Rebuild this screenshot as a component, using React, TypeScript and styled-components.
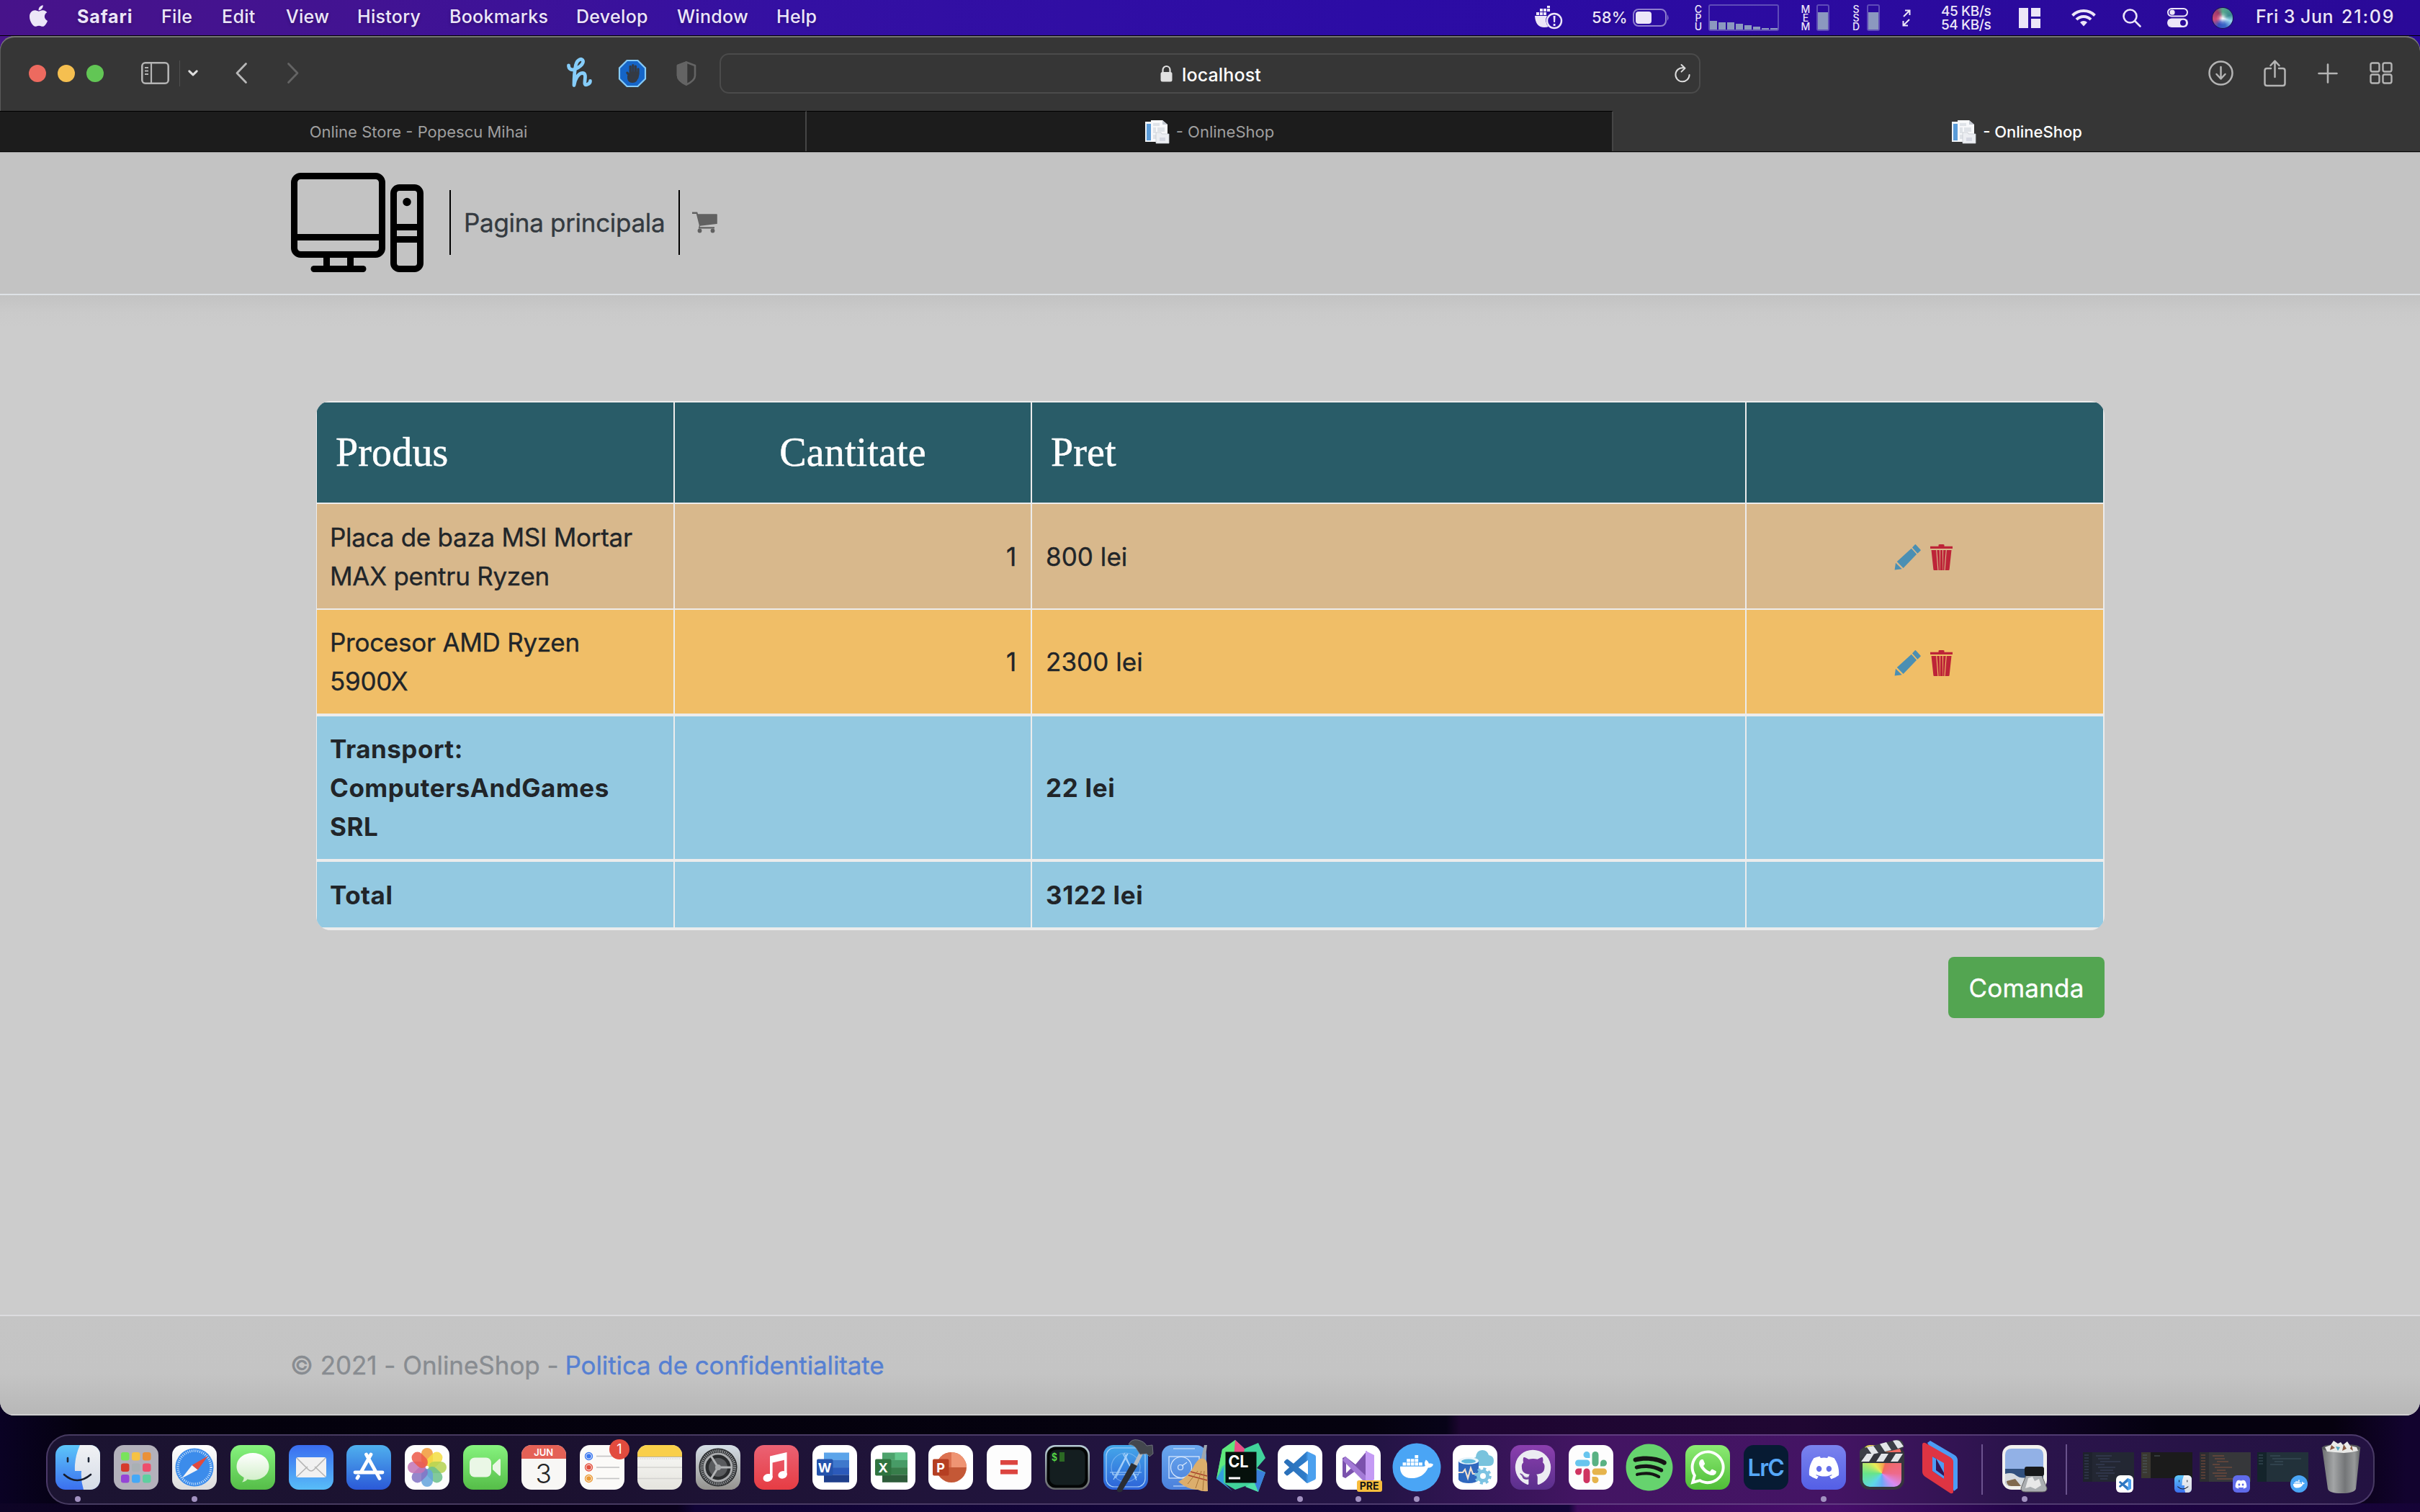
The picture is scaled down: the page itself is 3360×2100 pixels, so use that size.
import React from "react";
import styled, { createGlobalStyle } from "styled-components";
import { FaApple, FaDiscord, FaDocker, FaGithub, FaSpotify, FaWhatsapp, FaHandPaper } from "react-icons/fa";

const GlobalStyle = createGlobalStyle`
  *, *::before, *::after { box-sizing: border-box; }
  body { margin: 0; background: #0b0320; font-family: Inter, "Liberation Sans", sans-serif; }
  svg { display: block; overflow: visible; }
`;

/* ---------- Desktop ---------- */

const Desktop = styled.div`
  width: 3360px;
  height: 2100px;
  overflow: hidden;
  display: flex;
  flex-direction: column;
  background:
    linear-gradient(90deg, #0e0426 0, #090118 300px, #0a011c 940px, #110436 965px, #130538 2178px, #3c0b5c 2190px, #470e6a 2550px, #230548 2800px, #150336 3360px) left bottom / 100% 12px no-repeat,
    linear-gradient(90deg, #0a0224 0, #04010d 120px, #05020f 1900px, #070318 2008px, #1e0632 2028px, #200733 2500px, #120428 2800px, #04010f 3000px, #06010f 3240px, #12032e 3340px) left 1900px / 100% 190px no-repeat,
    linear-gradient(90deg, #48138a, #2a0998);
`;

/* ---------- Menu bar ---------- */

const MenuBar = styled.header`
  height: 50px;
  flex: none;
  display: flex;
  justify-content: space-between;
  padding-left: 40px;
  color: #ece6f8;
  border-bottom: 1px solid #000;
  background: linear-gradient(90deg, #47138a 0, #421392 500px, #3410a3 1100px, #2c0ca5 1900px, #2a0998 3360px);
`;

const MenuGroup = styled.nav`
  display: flex;
  align-items: center;
`;

const AppleSlot = styled.div`
  width: 67px;
  svg { width: 27px; height: 34px; margin-top: -5px; }
`;

const MenuItem = styled.span<{ $w: number; $bold?: boolean }>`
  width: ${(p) => p.$w}px;
  padding-bottom: 4px;
  font-size: 25px;
  font-weight: ${(p) => (p.$bold ? 700 : 500)};
  letter-spacing: ${(p) => (p.$bold ? 0.9 : 0.3)}px;
  white-space: nowrap;
  text-shadow: 0 2px 4px rgba(0, 0, 0, 0.25);
`;

const StatusSlot = styled.div<{ $w: number }>`
  width: ${(p) => p.$w}px;
  flex: none;
`;

const StatusText = styled(MenuItem)<{ $size?: number; $track?: number }>`
  font-size: ${(p) => p.$size ?? 25}px;
  letter-spacing: ${(p) => p.$track ?? 0.45}px;
  padding-bottom: ${(p) => (p.$size ? 1 : 4)}px;
`;

const StackedLabel = styled.div`
  width: 12px;
  font-size: 14px;
  line-height: 12px;
  font-weight: 500;
  text-align: center;
  display: flex;
  flex-direction: column;
  align-items: center;
`;

const Meter = styled.div<{ $wide?: boolean }>`
  width: ${(p) => (p.$wide ? 98 : 18)}px;
  height: 37px;
  border: 2px solid #5f4cb8;
  border-radius: 3px;
  display: flex;
  align-items: flex-end;
  gap: 2px;
`;

const MeterBar = styled.i<{ $h: number; $w: number }>`
  width: ${(p) => p.$w}px;
  height: ${(p) => p.$h}px;
  background: #8b98bf;
`;

const Rates = styled.div`
  font-size: 19px;
  line-height: 19px;
  font-weight: 500;
  letter-spacing: -0.4px;
  margin-top: 1px;
  white-space: nowrap;
`;

const Siri = styled.div`
  width: 28px;
  height: 28px;
  border-radius: 50%;
  background:
    radial-gradient(circle at 50% 52%, #fff 0, rgba(255, 255, 255, 0.2) 28%, transparent 45%),
    conic-gradient(#59a98c, #3a8a90 70deg, #9bd8f0 110deg, #3a6ac8 160deg, #3650c0 210deg, #d04a78 260deg, #9c3a68 320deg, #59a98c);
  box-shadow: 0 0 0 1px #1a1a4a;
`;

/* ---------- Browser window ---------- */

const BrowserWindow = styled.main`
  height: 1916px;
  flex: none;
  display: flex;
  flex-direction: column;
  border-radius: 20px;
  overflow: hidden;
  background: #cccccc;
`;

const Toolbar = styled.div`
  height: 104px;
  flex: none;
  display: flex;
  align-items: center;
  padding: 0 0 1px 40px;
  background: #363636;
  border-radius: 20px 20px 0 0;
  box-shadow: inset 0 2px 0 #747474, inset 1px 0 0 #5a5a5a;
  color: #b4b4b4;
`;

const TrafficLights = styled.div`
  display: flex;
  gap: 16px;
  width: 156px;
`;

const Light = styled.i<{ $color: string }>`
  width: 24px;
  height: 24px;
  border-radius: 50%;
  background: ${(p) => p.$color};
`;

const ToolSlot = styled.div<{ $w: number }>`
  width: ${(p) => p.$w}px;
  flex: none;
`;

const Divider = styled.div`
  width: 1px;
  height: 36px;
  margin-right: 11px;
  background: #505050;
`;

const AddressBar = styled.div`
  width: 1362px;
  height: 56px;
  margin-right: 705px;
  flex: none;
  display: flex;
  align-items: center;
  padding: 0 12px 0 610px;
  border: 2px solid #4b4b4b;
  border-radius: 13px;
  color: #fff;
`;

const Address = styled.span`
  margin-left: 13px;
  padding-top: 4px;
  flex: 1;
  font-size: 25px;
  font-weight: 500;
  letter-spacing: 0.15px;
`;

const TabBar = styled.div`
  height: 57px;
  flex: none;
  display: flex;
  background: #363636;
  border-bottom: 1px solid #000;
`;

const Tab = styled.div<{ $active?: boolean; $indent?: number }>`
  width: 1120px;
  height: 56px;
  display: flex;
  align-items: center;
  justify-content: center;
  gap: 10px;
  padding-left: ${(p) => p.$indent ?? 0}px;
  font-size: 22px;
  font-weight: ${(p) => (p.$active ? 500 : 400)};
  color: ${(p) => (p.$active ? "#fff" : "#9f9f9f")};
  background: ${(p) => (p.$active ? "#363636" : "#1c1c1c")};
  border-top: 1px solid ${(p) => (p.$active ? "#363636" : "#000")};
  border-right: ${(p) => (p.$active ? "0" : "2px solid #454545")};
`;

/* ---------- Shop page ---------- */

const NavBar = styled.div`
  height: 199px;
  flex: none;
  display: flex;
  align-items: center;
  padding: 0 0 2px 404px;
  background: #c3c3c3;
  border-top: 1px solid #8a8a8a;
  border-bottom: 2px solid #dee2e6;
`;

const NavLink = styled.a`
  display: flex;
  align-items: center;
  height: 90px;
  padding: 0 17px;
  border-left: 2px solid #000;
  font-size: 35px;
  letter-spacing: -0.3px;
  color: #343a40;
  -webkit-text-stroke: 0.35px #343a40;
  white-space: nowrap;
`;

const TextLink = styled(NavLink)`
  width: 318px;
  margin-left: 36px;
  padding: 0 0 1px 18px;
`;

const Page = styled.div`
  flex: 1;
  display: flex;
  flex-direction: column;
  align-items: flex-end;
  padding: 147px 438px 0 439px;
  background: linear-gradient(#c3c3c3 0, #cacaca 24px, #cccccc 44px);
`;

const CartTable = styled.div`
  width: 2483px;
  flex: none;
  overflow: hidden;
  padding: 2px 2px 4px 1px;
  border-radius: 20px;
  background: #ececec;
`;

const CartRow = styled.div<{ $h: number; $line: number; $bg: string }>`
  display: grid;
  grid-template-columns: 495px 494px 990px 495px;
  column-gap: 2px;
  height: ${(p) => p.$h}px;
  margin-bottom: ${(p) => p.$line}px;
  > div { background: ${(p) => p.$bg}; }
`;

const HeadCell = styled.div<{ $center?: boolean }>`
  display: flex;
  align-items: center;
  justify-content: ${(p) => (p.$center ? "center" : "flex-start")};
  padding: 0 26px 2px;
  font-family: "Liberation Serif", "Times New Roman", serif;
  font-size: 56px;
  letter-spacing: 0.15px;
  color: #fff;
  -webkit-text-stroke: 0.5px #fff;
`;

const Cell = styled.div<{ $align?: string; $bold?: boolean }>`
  display: flex;
  align-items: center;
  justify-content: ${(p) => p.$align ?? "flex-start"};
  padding: 0 19px 0 18px;
  font-size: 35px;
  line-height: 54px;
  font-weight: ${(p) => (p.$bold ? 700 : 400)};
  letter-spacing: ${(p) => (p.$bold ? 0.5 : -0.27)}px;
  color: #212529;
  -webkit-text-stroke: ${(p) => (p.$bold ? 0 : 0.35)}px #212529;
  white-space: pre;
`;

const NumberCell = styled(Cell)`
  padding-right: 20px;
`;

const PriceCell = styled(Cell)`
  padding-left: 19px;
  letter-spacing: ${(p) => (p.$bold ? 0.7 : 0.05)}px;
`;

const Actions = styled.div`
  display: flex;
  gap: 13px;
  padding: 3px 3px 0 0;
`;

const OrderButton = styled.button`
  width: 217px;
  height: 85px;
  margin-top: 37px;
  padding: 0;
  border: 0;
  border-radius: 8px;
  background: #53a551;
  color: #fff;
  font: 400 35px Inter, "Liberation Sans", sans-serif;
  letter-spacing: 0.2px;
  -webkit-text-stroke: 0.35px #fff;
`;

const Footer = styled.footer`
  height: 140px;
  flex: none;
  display: flex;
  align-items: center;
  gap: 9px;
  padding-left: 403px;
  border-top: 2px solid #dcdcdf;
  border-bottom: 2px solid #cfcfcf;
  background: linear-gradient(#c5c5c5 0, #c4c4c4 80px, #b7b7b7 138px);
  color: #888c91;
  font-size: 35px;
  letter-spacing: -0.05px;
  -webkit-text-stroke: 0.35px currentColor;
  a { color: #5680d2; letter-spacing: -0.12px; }
`;

/* ---------- Dock ---------- */

const Dock = styled.div`
  width: 3233px;
  height: 98px;
  margin: 26px 0 0 64px;
  padding-left: 2px;
  flex: none;
  display: flex;
  border: 2px solid rgba(150, 130, 180, 0.36);
  border-radius: 32px;
  background: linear-gradient(90deg, #1c1432 0, #1b1130 700px, #20143a 1200px, #241446 1850px, #431563 2130px, #441464 2480px, #2b144c 2720px, #231241 3233px);
`;

const DockSlot = styled.div`
  position: relative;
  width: 80.8px;
  flex: none;
  display: flex;
  flex-direction: column;
  align-items: center;
  padding-top: 13px;
`;

const Tile = styled.div<{ $bg?: string }>`
  width: 62px;
  height: 62px;
  flex: none;
  display: flex;
  align-items: center;
  justify-content: center;
  border-radius: 14px;
  background: ${(p) => p.$bg ?? "none"};
`;

const Running = styled.i`
  width: 8px;
  height: 8px;
  margin-top: 9px;
  border-radius: 50%;
  background: #a291c0;
`;

const Badge = styled.span`
  position: absolute;
  top: 5px;
  right: 2px;
  width: 28px;
  height: 28px;
  border-radius: 50%;
  background: #e24b3e;
  color: #fff;
  font-size: 18px;
  line-height: 28px;
  text-align: center;
`;

const PreBadge = styled.span`
  position: absolute;
  top: 62px;
  left: 38px;
  width: 35px;
  height: 16px;
  border-radius: 3px;
  background: #f7bd3c;
  color: #171717;
  font-size: 14px;
  font-weight: 700;
  line-height: 16px;
  text-align: center;
`;

const DockRule = styled.i`
  width: 2px;
  height: 70px;
  margin: 12px 17px 0;
  flex: none;
  background: rgba(170, 145, 205, 0.5);
`;

const Calendar = styled(Tile)`
  flex-direction: column;
  justify-content: flex-start;
  overflow: hidden;
  background: #f8f7f5;
  color: #252525;
  font-size: 37px;
  font-weight: 300;
  line-height: 41px;
  span {
    width: 100%;
    height: 19px;
    background: #e46156;
    color: #fff;
    font-size: 13px;
    font-weight: 600;
    line-height: 20px;
    text-align: center;
  }
`;

const Lightroom = styled(Tile)`
  background: #071b33;
  color: #56a8f8;
  font-size: 32px;
  font-weight: 600;
  letter-spacing: -1.5px;
`;

const MiniWindow = styled.div`
  position: relative;
  width: 80.8px;
  padding: 23px 0 0 5px;
  flex: none;
`;

const MiniBadge = styled.div<{ $bg: string; $round?: boolean }>`
  position: absolute;
  left: 51px;
  top: 55px;
  width: 24px;
  height: 24px;
  border-radius: ${(p) => (p.$round ? "50%" : "6px")};
  background: ${(p) => p.$bg};
  display: flex;
  align-items: center;
  justify-content: center;
`;

/* ---------- Menu bar icons ---------- */

const DockerStatus = () => (
  <svg width="38" height="34" viewBox="0 0 38 34" fill="currentColor">
    <path d="M0 14h17a12 12 0 0 0 2 15q-2 1-6 1Q1 30 0 14ZM2 9h4v4H2ZM7 9h4v4H7ZM12 9h4v4h-4ZM7 4h4v4H7ZM12 4h4v4h-4ZM17 0h4v3h-4ZM17 4h4v4h-4Z" />
    <circle cx="27" cy="21" r="10" fill="none" stroke="currentColor" strokeWidth="2.4" />
    <path d="M25.6 14h3l-.5 9h-2ZM25.7 25h2.8v3h-2.8Z" />
  </svg>
);
const Battery = () => (
  <svg width="50" height="25" viewBox="0 0 50 25">
    <rect x="1" y="1" width="45" height="23" rx="7" fill="none" stroke="#8f7fce" strokeWidth="2" />
    <rect x="4" y="4" width="22" height="17" rx="4" fill="#ece6f8" />
    <path d="M48 8q3 4.500 0 9Z" fill="#8f7fce" />
  </svg>
);
const NetArrows = () => (
  <svg width="12" height="24" viewBox="0 0 12 24" fill="none" stroke="currentColor" strokeWidth="2">
    <path d="M4 1.500h6.500V8M10.500 1.500 2 10M1.500 16v6.500H8M1.500 22.500 10 14" />
  </svg>
);
const Panes = () => (
  <svg width="30" height="28" viewBox="0 0 30 28" fill="currentColor">
    <path d="M0 0h13v28H0ZM17 0h13v12H17ZM17 15h13v13H17Z" />
  </svg>
);
const Wifi = () => (
  <svg width="34" height="25" viewBox="0 0 34 25" fill="none" stroke="currentColor" strokeWidth="4">
    <path d="M1.500 9.500a22 22 0 0 1 31 0M7 15.200a14 14 0 0 1 20 0" />
    <path d="m17 24.500-5-5.500a7 7 0 0 1 10 0Z" fill="currentColor" stroke="none" />
  </svg>
);
const Search = () => (
  <svg width="26" height="26" viewBox="0 0 26 26" fill="none" stroke="currentColor" strokeWidth="2.600" strokeLinecap="round">
    <circle cx="10.500" cy="10.500" r="9" />
    <path d="m17.500 17.500 7 7" />
  </svg>
);
const ControlCenter = () => (
  <svg width="29" height="27" viewBox="0 0 29 27">
    <rect x="1" y="1" width="27" height="10.500" rx="5.200" fill="none" stroke="currentColor" strokeWidth="2" />
    <circle cx="7" cy="6.200" r="3.600" fill="currentColor" />
    <rect x="0" y="14.500" width="29" height="12.500" rx="6.200" fill="currentColor" />
    <circle cx="22" cy="20.700" r="4" fill="#2a0998" />
  </svg>
);

/* ---------- Toolbar icons ---------- */

const SidebarIcon = () => (
  <svg width="39" height="31" viewBox="0 0 39 31" fill="none" stroke="currentColor" strokeWidth="2.600">
    <rect x="1.300" y="1.300" width="36.400" height="28.400" rx="4.500" />
    <path d="M14 1.500v28" strokeWidth="2.200" />
    <path d="M5 8h5M5 12.500h5M5 17h5" strokeWidth="1.800" />
  </svg>
);
const Chevron = ({ dir, color }: { dir: "left" | "right"; color: string }) => (
  <svg width="16" height="29" viewBox="0 0 16 29" fill="none" stroke={color} strokeWidth="2.800" strokeLinecap="round" strokeLinejoin="round">
    <path d={dir === "left" ? "M14.500 1.500 2 14.500l12.500 13" : "M1.500 1.500 14 14.500l-12.500 13"} />
  </svg>
);
const SmallDown = () => (
  <svg width="14" height="9" viewBox="0 0 14 9" fill="none" stroke="#dedede" strokeWidth="3" strokeLinecap="round" strokeLinejoin="round">
    <path d="m1.800 1.800 5.200 5 5.200-5" />
  </svg>
);
const HoneyIcon = () => (
  <svg width="35" height="39" viewBox="0 0 35 39" fill="none" stroke="#86cdfa" strokeWidth="4.800" strokeLinecap="round" strokeLinejoin="round">
    <path d="M2.500 9c0 5 4 7 9 5s12-7 11-11.500-8-2-10 5.500c-2 9-2.500 20-2.500 28.500 1-8 6-17 11.500-17s4 7 3.500 11 0 6 3 5 4.500-3 4.500-5" />
  </svg>
);
const BlockerIcon = () => (
  <svg width="38" height="38" viewBox="0 0 38 38">
    <path d="M11.500 1h15L37 11.500v15L26.500 37h-15L1 26.500v-15Z" fill="#1565c8" stroke="#86cbf8" strokeWidth="2.200" />
    <g transform="translate(9 6)" color="#343a44"><FaHandPaper size={21} /></g>
    <path d="M12 22v4q1 6 7.500 6t7-7v-4Z" fill="#343a44" />
  </svg>
);
const ShieldIcon = () => (
  <svg width="28" height="34" viewBox="0 0 28 34" fill="none" stroke="#646464" strokeWidth="2.600" strokeLinejoin="round">
    <path d="m14 1.500 12 4.500v14q0 7-12 12.500Q2 27 2 20V6Z" />
    <path d="M14 1.500 2 6v14q0 7 12 12.500Z" fill="#646464" />
  </svg>
);
const Lock = () => (
  <svg width="17" height="24" viewBox="0 0 17 24">
    <path d="M3.500 11V7a5 5 0 0 1 10 0v4" fill="none" stroke="#e0e0e0" strokeWidth="2.200" />
    <rect x="0.500" y="10" width="16" height="13.500" rx="2.500" fill="#e0e0e0" />
  </svg>
);
const Reload = () => (
  <svg width="22" height="26" viewBox="0 0 22 26" fill="none" stroke="#dcdcdc" strokeWidth="2" strokeLinecap="round" strokeLinejoin="round">
    <path d="M12 5.200A9.600 9.600 0 1 0 20.600 15M9.500 1l5 4.800-5 4.800" />
  </svg>
);
const Download = () => (
  <svg width="35" height="35" viewBox="0 0 35 35" fill="none" stroke="currentColor" strokeWidth="2.500" strokeLinecap="round" strokeLinejoin="round">
    <circle cx="17.500" cy="17.500" r="16" />
    <path d="M17.500 9v16M11.500 19l6 6.500 6-6.500" />
  </svg>
);
const Share = () => (
  <svg width="31" height="38" viewBox="0 0 31 38" fill="none" stroke="currentColor" strokeWidth="2.500" strokeLinecap="round" strokeLinejoin="round">
    <path d="M10 12H4.500Q1.500 12 1.500 15v18q0 3 3 3h22q3 0 3-3V15q0-3-3-3H21M15.500 24V1.800M9.500 8l6-6.400L21.500 8" />
  </svg>
);
const Plus = () => (
  <svg width="28" height="28" viewBox="0 0 28 28" stroke="currentColor" strokeWidth="2.600" strokeLinecap="round">
    <path d="M14 1.500v25M1.500 14h25" />
  </svg>
);
const TabGrid = () => (
  <svg width="32" height="31" viewBox="0 0 32 31" fill="none" stroke="currentColor" strokeWidth="2.400">
    <rect x="1.500" y="1.500" width="12" height="12" rx="2.500" />
    <rect x="18.500" y="1.500" width="12" height="12" rx="2.500" />
    <rect x="1.500" y="17.500" width="12" height="12" rx="2.500" />
    <rect x="18.500" y="17.500" width="12" height="12" rx="2.500" />
  </svg>
);
const PageIcon = () => (
  <svg width="33" height="32" viewBox="0 0 33 32">
    <path d="M0 2h22v28H0Z" fill="#eef3f8" />
    <path d="M2 5h6v23H2Z" fill="#5a9bd8" />
    <path d="M8 0h16l7 6v24H8Z" fill="#f7f8fa" />
    <path d="M24 0v6h7Z" fill="#c3c8d0" />
    <path d="M11 4h9v4h-9ZM11 10h4v8h-4ZM17 10h10v6H17ZM11 20h4v6h-4Z" fill="#dfe3e8" />
    <path d="M15 17h7l1 2h10v13H15Z" fill="#eceef2" stroke="#c7cad1" strokeWidth=".8" />
    <path d="M20 24h8v5h-8Z" fill="#d5d8e2" />
  </svg>
);

/* ---------- Shop icons ---------- */

const ShopLogo = () => (
  <svg width="184" height="138" viewBox="0 0 184 138" fill="none" stroke="#000" strokeWidth="9">
    <rect x="4.500" y="4.500" width="122" height="109" rx="9" />
    <path d="M4 89.500h123M49.500 116v14M82.500 116v14" />
    <path d="M32 133.500h68" strokeLinecap="round" />
    <rect x="142.500" y="20.500" width="37" height="113" rx="8" />
    <path d="M142 75.500h38M142 92.500h38" />
    <circle cx="161" cy="40.500" r="5.700" fill="#000" stroke="none" />
  </svg>
);
const CartIcon = () => (
  <svg width="35" height="30" viewBox="0 0 35 30" fill="#616161">
    <path d="M0 .5h7.200l.8 2.700h26q.8 0 .8 1v12q0 .8-.8.9L11 19.700l-.3 1.600H31v2.200H8.800L9.800 19 5.800 3H0Z" />
    <circle cx="10.500" cy="26.500" r="2.900" />
    <circle cx="28.500" cy="26.500" r="2.900" />
  </svg>
);
const Pencil = () => (
  <svg width="37" height="36" viewBox="0 0 37 36" fill="#4b8fb3">
    <path d="M.6 35.600 2 25.800l8.700 8.400ZM3.800 24.100 23.800 5.700l7.300 8-18.500 19.200ZM25 4.600 28.600.5q.7-.8 1.500 0l6.400 7q.6.7 0 1.300l-4.100 4Z" />
  </svg>
);
const TrashIcon = () => (
  <svg width="31" height="36" viewBox="0 0 31 36" fill="#bd2438">
    <path d="M0 2.800h11.500V.8Q12 0 13 0h5q1 0 1.500.8v2H31V6H0ZM1.500 8h6.700l2.200 28H5.500q-1 0-1.100-1ZM9.300 8h3.600l.7 28h-2.100ZM14 8h3v28h-3ZM18.100 8h3.600l-2.200 28h-2.100ZM22.800 8h6.700l-2.900 27q-.1 1-1.100 1h-4.900Z" />
  </svg>
);

/* ---------- Dock icons ---------- */

const CODE_PATH =
  "M23.15 2.587L18.21.21a1.494 1.494 0 0 0-1.705.29l-9.46 8.63-4.12-3.128a.999.999 0 0 0-1.276.057L.327 7.261A1 1 0 0 0 .326 8.74L3.899 12 .326 15.26a1 1 0 0 0 .001 1.479L1.65 17.94a.999.999 0 0 0 1.276.057l4.12-3.128 9.46 8.63a1.492 1.492 0 0 0 1.704.29l4.942-2.377A1.5 1.5 0 0 0 24 20.06V3.939a1.5 1.5 0 0 0-.85-1.352zm-5.146 14.861L10.826 12l7.178-5.448v10.896z";

const CodeLogo = ({ size }: { size: number }) => (
  <svg width={size} height={size} viewBox="0 0 24 24">
    <defs>
      <linearGradient id="code" x1="0" x2="1">
        <stop offset="0" stopColor="#2a6fb8" />
        <stop offset=".68" stopColor="#2f7cc9" />
        <stop offset=".76" stopColor="#4ba0ee" />
      </linearGradient>
    </defs>
    <path d={CODE_PATH} fill="url(#code)" />
  </svg>
);

const Finder = ({ size = 62 }: { size?: number }) => (
  <svg width={size} height={size} viewBox="0 0 62 62">
    <defs>
      <linearGradient id="fb" x2="0" y2="1"><stop stopColor="#5dc6fa" /><stop offset="1" stopColor="#3b6fee" /></linearGradient>
      <linearGradient id="fw" x2="0" y2="1"><stop stopColor="#f1f2f5" /><stop offset="1" stopColor="#d4dbe6" /></linearGradient>
      <clipPath id="fc"><rect width="62" height="62" rx="14" /></clipPath>
    </defs>
    <g clipPath="url(#fc)">
      <path d="M0 0h62v62H0Z" fill="url(#fb)" />
      <path d="M34 0Q26 18 27 36h9q-1 13 3 26h23V0Z" fill="url(#fw)" />
    </g>
    <path d="M17 18v5M46 18v5" stroke="#1d2536" strokeWidth="2.600" strokeLinecap="round" />
    <path d="M12 41q18 16 37 0" fill="none" stroke="#171c2a" strokeWidth="2.600" strokeLinecap="round" />
  </svg>
);

const padColors = ["#7ae35c", "#f6c244", "#ea9138", "#d63a2c", "#a9b0b4", "#ee4e6c", "#9544d6", "#45a8f6", "#5ecf9f"];
const Launchpad = () => (
  <svg width="62" height="62">
    {padColors.map((c, i) => (
      <rect key={c} x={10 + (i % 3) * 15} y={10 + Math.floor(i / 3) * 15.5} width="11.500" height="11.500" rx="3.200" fill={c} />
    ))}
  </svg>
);

const SafariIcon = () => (
  <svg width="62" height="62" viewBox="0 0 62 62">
    <circle cx="31" cy="31" r="26.500" fill="#3c8ceb" />
    <circle cx="31" cy="31" r="23" fill="none" stroke="#d4e8fb" strokeWidth="3.400" strokeDasharray="1 1.800" />
    <path d="M50 15 35.500 34.500l-8-6.500Z" fill="#e2493d" />
    <path d="m27.500 28 8 6.500L13.500 46Z" fill="#f3f4f6" />
  </svg>
);
const Messages = () => (
  <svg width="62" height="62" viewBox="0 0 62 62">
    <defs><linearGradient id="mg" x2="0" y2="1"><stop stopColor="#fff" /><stop offset="1" stopColor="#cfeec6" /></linearGradient></defs>
    <path d="M31 11c13 0 22.500 8 22.500 19S44 48.500 31 48.500q-4 0-7.500-1Q21 51 16 51.500q3-3 2.500-6.500C12 41.500 8.500 36.500 8.500 30 8.500 19 18 11 31 11Z" fill="url(#mg)" />
  </svg>
);
const Mail = () => (
  <svg width="62" height="62" viewBox="0 0 62 62" fill="none" stroke="#b5b5b5" strokeWidth="1.600">
    <rect x="10" y="17" width="42" height="28" rx="3" fill="#f1f1f1" stroke="none" />
    <path d="m11 44 15-14M51 44 36 30M11 18l16 16q4 4 8 0l16-16" />
  </svg>
);
const AppStore = () => (
  <svg width="62" height="62" viewBox="0 0 62 62" fill="none" stroke="#fff" strokeWidth="4.800" strokeLinecap="round">
    <path d="M34 13 20 38M27.500 13 46 46.500M12 38h38M15 46l1.500-2.500" />
  </svg>
);
const petals = ["#f29a38", "#f3dd41", "#b5d352", "#6cc08b", "#64a4dc", "#8273c4", "#c275b6", "#ec5a49"];
const Photos = () => (
  <svg width="62" height="62" viewBox="-31 -31 62 62">
    {petals.map((c, i) => (
      <rect key={c} x="-8" y="-27" width="16" height="25" rx="8" fill={c} opacity=".86" transform={`rotate(${i * 45})`} />
    ))}
  </svg>
);
const FaceTime = () => (
  <svg width="62" height="62" viewBox="0 0 62 62" fill="#eaf7e6">
    <rect x="9" y="17.500" width="30" height="27" rx="7" />
    <path d="M41 28 50 19.500q2-1 2 1.500v20q0 2.500-2 1.500L41 34Z" />
  </svg>
);
const Reminders = () => (
  <svg width="62" height="62" viewBox="0 0 62 62">
    {["#3977f0", "#e3503f", "#eb9a35"].map((c, i) => (
      <g key={c} transform={`translate(0 ${15.500 + i * 15.500})`}>
        <circle cx="12.500" r="5" fill="none" stroke={c} strokeWidth="1.400" />
        <circle cx="12.500" r="3.300" fill={c} />
        <path d="M23 0h32" stroke="#c4c4c4" strokeWidth="1.600" />
      </g>
    ))}
  </svg>
);
const Notes = () => (
  <svg width="62" height="62" viewBox="0 0 62 62">
    <path d="M0 16V14A14 14 0 0 1 14 0h34a14 14 0 0 1 14 14v2Z" fill="#f9cf4a" />
    <path d="M0 16.500h62" stroke="#b9b2a0" />
    <path d="M1 19h60" stroke="#bbb" strokeDasharray="1 1.600" />
    <path d="M0 31h62M0 46.500h62" stroke="#d4d3d0" strokeWidth="1.400" />
  </svg>
);
const Settings = () => (
  <svg width="62" height="62" viewBox="0 0 62 62" fill="none">
    <circle cx="31" cy="31" r="26.500" fill="#2a2c2e" />
    <circle cx="31" cy="31" r="23" stroke="#8c8f92" strokeWidth="4" strokeDasharray="1.500 1.200" />
    <circle cx="31" cy="31" r="19" stroke="#a9abad" strokeWidth="3" />
    <circle cx="31" cy="31" r="13" fill="#595b5e" />
    <path d="M31 31h19M31 31l-10-16M31 31 21 47" stroke="#b2b4b6" strokeWidth="3" />
    <circle cx="31" cy="31" r="4" fill="#a7a9ab" />
  </svg>
);
const Music = () => (
  <svg width="62" height="62" viewBox="0 0 62 62" fill="#fff">
    <path d="M22 15.500 45.500 10v31.500h-3.600V20.800L25.600 24.500v20H22Z" />
    <ellipse cx="19" cy="45.500" rx="6.800" ry="5.400" transform="rotate(-18 19 45)" />
    <ellipse cx="39.500" cy="41.500" rx="6.400" ry="5.200" transform="rotate(-18 39 41)" />
  </svg>
);
const OfficeLetter = styled.text`
  font: 700 18px Inter, "Liberation Sans", sans-serif;
  fill: #fff;
  text-anchor: middle;
`;
const Office = ({ letter, shades, box }: { letter: string; shades: string[]; box: string }) => (
  <svg width="62" height="62" viewBox="0 0 62 62">
    {letter === "P" ? (
      <>
        <circle cx="32" cy="31" r="21" fill={shades[2]} />
        <path d="M32 10a21 21 0 0 1 21 21H32Z" fill={shades[0]} />
        <path d="M32 10a21 21 0 0 0-21 21h21Z" fill={shades[1]} />
      </>
    ) : (
      shades.map((c, i) => <rect key={c} x="16" y={10.500 + i * 10.300} width="35" height="10.400" fill={c} />)
    )}
    {letter === "X" && <path d="M33.500 10.500H51v10.300H33.500Z" fill="#63c58b" />}
    <rect x="6" y="19.500" width="22.500" height="23" rx="2" fill={box} />
    <OfficeLetter x="17.200" y="37.500">{letter}</OfficeLetter>
  </svg>
);
const TermText = styled.text`
  font: 700 17px "Liberation Mono", monospace;
  fill: #55d645;
`;
const Terminal = () => (
  <svg width="62" height="62" viewBox="0 0 62 62">
    <rect x="2.500" y="2.500" width="57" height="57" rx="12" fill="#030505" />
    <rect x="6.500" y="6.500" width="49" height="49" rx="9" fill="#141e20" />
    <TermText x="9" y="22" textLength="8" lengthAdjust="spacingAndGlyphs">$</TermText>
    <path d="M20 10h7v13h-7Z" fill="#2c6a24" />
  </svg>
);
const Blueprint = () => (
  <g fill="none" stroke="#a9d2fa" strokeWidth="1.200">
    <rect x="4" y="4" width="54" height="54" rx="11" />
    <circle cx="31" cy="31" r="20" opacity=".5" />
    <path d="M34 12 17 46M27 12l19 34M9 38h44M13 38v3h36M29 11l17 38M33 12 14 48" />
  </g>
);
const Xcode = () => (
  <svg width="62" height="62" viewBox="0 0 62 62">
    <Blueprint />
    <path d="M52 6 40 30l5 2 12-24Z" fill="#b6bcc2" />
    <path d="M39 25 19 61q-1 4 3 4.500 4 0 5-3.500L47 29Z" fill="#2a2e35" />
    <path d="M35-1q4-8 13-6 9 2 12 8l8-1 1 12-5 4-4-4-9 1-4-6q-3-7-12-8Z" fill="#43474e" stroke="#7b8087" strokeWidth=".8" />
  </svg>
);
const DevCleaner = () => (
  <svg width="62" height="62" viewBox="0 0 62 62">
    <g fill="none" stroke="#dcebfd" strokeWidth="1.200">
      <rect x="10" y="16" width="42" height="30" /><circle cx="27" cy="31" r="14.500" /><circle cx="26" cy="31" r="3.500" />
      <path d="m28 29 7-5M16 5h30M16 57h22" />
    </g>
    <path d="M59 0h4l-3 22h-6Z" fill="#9fa6ae" />
    <path d="M53 19q9-2 10 7l1 38q-8 1-14-2-12 1-27-11 14-8 20-19 5-10 10-13Z" fill="#dcae6c" />
    <path d="m40 37 23 6M37 42l26 7" stroke="#a8402d" strokeWidth="1.600" />
    <path d="m50 36-14 18M55 36l-8 24M59 36l-2 27" stroke="#a87538" strokeWidth="1" />
  </svg>
);
const CLionText = styled.text`
  font: 700 23px Inter, "Liberation Sans", sans-serif;
  fill: #fff;
`;
const CLion = () => (
  <svg width="62" height="62" viewBox="0 0 62 62">
    <path d="M4 6 22-7l13 12L54-3l10 21-12 14 12 6-10 27-18-8-14 5L-4 47Z" fill="#41d39b" />
    <path d="M4 6 22-7l2 24L3 30-4 47Z" fill="#5fe97c" />
    <path d="m22-7 13 12-2 12H20Z" fill="#e94d86" />
    <path d="m-4 47 10-17v22l12 12Z" fill="#33a0dc" />
    <path d="m52 34 12 4-10 27-7-14Z" fill="#3a80dc" />
    <path d="M36 58 48 50l6 15Z" fill="#4fe0a8" />
    <path d="M8.500 9.500h43v43h-43Z" fill="#06110c" />
    <CLionText x="12.500" y="31" textLength="28" lengthAdjust="spacingAndGlyphs">CL</CLionText>
    <path d="M13 44.500h16v3H13Z" fill="#fff" />
  </svg>
);
const VisualStudio = () => (
  <svg width="44" height="46" viewBox="0 0 44 46">
    <path d="M0 10 4 8l14 11L34 0v46L18 28 4 38l-4-2Zm5 5v16l8-8Z" fill="#7b52ad" fillRule="evenodd" />
    <path d="M0 13 4 8l32 30-4 7Z" fill="#a37ad6" />
    <path d="m32 0 12 6v34l-12 6Z" fill="#c49af4" />
  </svg>
);
const AzureData = () => (
  <svg width="62" height="62" viewBox="0 0 62 62">
    <path d="M34 29q-7 0-7-6 0-5 5-6 1-10 9-10 7 0 9 7 7 1 7 8t-7 7Z" fill="#79c3dd" />
    <path d="M8 22h28v26q-3 5-14 5T8 48Z" fill="#2f68be" />
    <ellipse cx="22" cy="22" rx="14" ry="5" fill="#e9f5fb" />
    <ellipse cx="22" cy="22.500" rx="10" ry="3" fill="#5fb8dd" />
    <path d="M8 38h6l3-4 4 12 4-14 3 8h6" fill="none" stroke="#f2dfcf" strokeWidth="2.200" />
    <circle cx="42" cy="43" r="6.500" fill="none" stroke="#7cc3e2" strokeWidth="5" />
    <circle cx="42" cy="43" r="10" fill="none" stroke="#7cc3e2" strokeWidth="3.500" strokeDasharray="4 3.850" />
  </svg>
);
const Slack = () => (
  <svg width="44" height="44" viewBox="0 0 44 44">
    <g fill="#68c5ee"><rect x="0" y="11.500" width="20.500" height="9" rx="4.500" /><path d="M11.500 4.500a4.500 4.500 0 0 1 9 0V9H16a4.500 4.500 0 0 1-4.500-4.500Z" /></g>
    <g fill="#59b283"><rect x="23.500" y="0" width="9" height="20.500" rx="4.500" /><path d="M39.500 11.500a4.500 4.500 0 0 1 0 9H35V16a4.500 4.500 0 0 1 4.500-4.500Z" /></g>
    <g fill="#e6b44c"><rect x="23.500" y="23.500" width="20.500" height="9" rx="4.500" /><path d="M23.500 35H28a4.500 4.500 0 1 1-4.500 4.500Z" /></g>
    <g fill="#cf3461"><rect x="11.500" y="23.500" width="9" height="20.500" rx="4.500" /><path d="M4.500 32.500a4.500 4.500 0 0 1 0-9H9V28a4.500 4.500 0 0 1-4.500 4.500Z" /></g>
  </svg>
);
const Wheel = styled.div`
  position: relative;
  width: 62px;
  height: 62px;
  border: 4px solid #35353d;
  border-top: 0;
  border-radius: 14px;
  background: conic-gradient(from 20deg at 50% 68%, #f06a5c, #ee6a8a 70deg, #d88af0 110deg, #6aa8f6 160deg, #5ed8e8 200deg, #66e48a 250deg, #e8ee58 300deg, #f6a04e 350deg, #f06a5c);
  svg { position: absolute; left: -4px; top: 0; }
`;
const FinalCut = () => (
  <Wheel>
    <svg width="62" height="62" viewBox="0 0 62 62">
      <path d="M0 10h62v15H0Z" fill="#35373e" />
      <path d="M0 10q0-5 6-6L50-7q9-2 11 6v5L0 18Z" fill="#3c3f47" />
      <path d="m10 3 9-2 7 10-9 2ZM28-1.500l9-2.500 7 11-9 2ZM46-6q7-2 10 1l5 7-8 3ZM10 12h10l-7 11H2ZM30 12h10l-7 11H23ZM50 12h10l-7 11H43Z" fill="#e3e6e9" />
    </svg>
  </Wheel>
);
const Toolbox = () => (
  <svg width="50" height="74" viewBox="0 0 50 74">
    <path d="m7 3 4-3 34 20q4 3 4 7v39l-5 4Z" fill="#4c9cf4" />
    <path d="M0 6q0-4 4-3l35 20q4 3 4 6v42q0 3-4 2L4 50q-4-3-4-7Zm14 16v20l16 11V31Z" fill="#de3443" fillRule="evenodd" />
    <path d="m14 22 5 3v16l11 8v4L14 42Z" fill="#4c9cf4" />
  </svg>
);
const Preview = () => (
  <svg width="62" height="62" viewBox="0 0 62 62">
    <rect width="62" height="62" rx="13" fill="#f2f1ee" />
    <path d="M4 14q0-9 9-9h35q9 0 9 9v20H4Z" fill="#92b1e6" />
    <path d="M4 33h53v24H12q-8 0-8-8Z" fill="#31507e" />
    <path d="M4 40q9-3 15 2t16 3v12H12q-8 0-8-8Z" fill="#d6dbe0" />
    <path d="M6 50l12-3 8 10H12q-6-1-6-7Z" fill="#80694e" />
    <path d="M34 40h20l8 20q0 5-6 5H32q-6 0-6-5Z" fill="#aaadb0" stroke="#666" />
    <path d="m36 46 6-2 3 6 6-3 3 9-8 5-7-3-7 2Z" fill="#e8e8e8" />
    <rect x="31" y="30" width="27" height="13" rx="3" fill="#17181a" />
  </svg>
);
const Trash = () => (
  <svg width="56" height="74" viewBox="0 0 56 74">
    <defs><linearGradient id="tr"><stop stopColor="#6d6f71" /><stop offset=".3" stopColor="#a3a5a6" /><stop offset=".6" stopColor="#747678" /><stop offset=".85" stopColor="#97999a" /><stop offset="1" stopColor="#626466" /></linearGradient></defs>
    <path d="M1 10h53l-6 57q-3 6-20 6T9 67Z" fill="url(#tr)" />
    <ellipse cx="27.500" cy="10" rx="27" ry="5.500" fill="#55585b" />
    <path d="m5 9 8-3 4-6 6 4 4-2 3 4 6-5 4 6 9 2 2 5-10 2-10 1-12-1L8 15Z" fill="#e9e9e7" />
    <path d="m14 6 5 4-7 3ZM31 5l4 6-6 3ZM42 6l2 8-4-3Z" fill="#8a5a42" />
    <path d="m20 8 6 1-3 5Z" fill="#4ea6c0" />
  </svg>
);

const MiniScreen = ({ bg, side, lines, h = 41, rows }: { bg: string; side: string; lines: string; h?: number; rows: number[] }) => (
  <svg width="71" height={h} viewBox={`0 0 71 ${h}`}>
    <path d={`M0 0h71v${h}H0Z`} fill={bg} />
    <path d={`M0 0h13v${h}H0Z`} fill={side} />
    {rows.map((w, i) => (
      <path key={i} d={`M${18 + (i % 3) * 3} ${5 + i * 4}h${w}M2 ${4 + i * 4}h6`} stroke={lines} strokeWidth="1.100" />
    ))}
  </svg>
);

/* ---------- Data ---------- */

const menus: [string, number][] = [
  ["File", 84], ["Edit", 89], ["View", 99], ["History", 128], ["Bookmarks", 176], ["Develop", 140], ["Window", 138], ["Help", 60],
];

const cpuLoad = [12, 10, 10, 8, 6, 4, 2, 2];

type Line = { name: string; qty?: string; price: string; bg: string; h: number; line: number; bold?: boolean };
const cart: Line[] = [
  { name: "Placa de baza MSI Mortar\nMAX pentru Ryzen", qty: "1", price: "800 lei", bg: "#d8b88c", h: 145, line: 2 },
  { name: "Procesor AMD Ryzen\n5900X", qty: "1", price: "2300 lei", bg: "#f0be67", h: 144, line: 4 },
  { name: "Transport:\nComputersAndGames\nSRL", price: "22 lei", bg: "#93c9e1", h: 198, line: 4, bold: true },
  { name: "Total", price: "3122 lei", bg: "#93c9e1", h: 91, line: 0, bold: true },
];

type App = { id: string; bg?: string; icon: React.ReactNode; running?: boolean; extra?: React.ReactNode };
const green = "linear-gradient(#86f37e, #55bd48)";
const apps: App[] = [
  { id: "finder", icon: <Finder />, running: true },
  { id: "launchpad", bg: "#b3b1bb", icon: <Launchpad /> },
  { id: "safari", bg: "linear-gradient(#fff, #dcdcdc)", icon: <SafariIcon />, running: true },
  { id: "messages", bg: green, icon: <Messages /> },
  { id: "mail", bg: "linear-gradient(#3a6df0, #58bdf8)", icon: <Mail /> },
  { id: "appstore", bg: "linear-gradient(#4fb0ee, #2b59d8)", icon: <AppStore /> },
  { id: "photos", bg: "#fdfdfd", icon: <Photos /> },
  { id: "facetime", bg: green, icon: <FaceTime /> },
  { id: "calendar", icon: <Calendar><span>JUN</span>3</Calendar> },
  { id: "reminders", bg: "#fbfaf8", icon: <Reminders />, extra: <Badge>1</Badge> },
  { id: "notes", bg: "linear-gradient(#fafaf8, #e5e4de)", icon: <Notes /> },
  { id: "settings", bg: "linear-gradient(#d5dee6, #94928e)", icon: <Settings /> },
  { id: "music", bg: "linear-gradient(#eb6274, #e63c43)", icon: <Music /> },
  { id: "word", bg: "#fff", icon: <Office letter="W" shades={["#5ba4ea", "#3f78cc", "#2b5abb", "#1e3f8c"]} box="#2453ac" /> },
  { id: "excel", bg: "#fff", icon: <Office letter="X" shades={["#4da36c", "#479b66", "#377d4a", "#2d5c3a"]} box="#2f7440" /> },
  { id: "powerpoint", bg: "#fff", icon: <Office letter="P" shades={["#ef9473", "#dc7150", "#c45836"]} box="#b53f22" /> },
  { id: "equals", bg: "#fdfdfd", icon: <svg width="24" height="20"><path d="M0 0h24v6.500H0ZM0 13h24v6.500H0Z" fill="#dc4540" /></svg> },
  { id: "terminal", bg: "linear-gradient(#b8cdd6, #66686a)", icon: <Terminal /> },
  { id: "xcode", bg: "linear-gradient(#45a8ea, #2c62d8)", icon: <Xcode /> },
  { id: "devcleaner", bg: "linear-gradient(#6aa8ee, #4a80dc)", icon: <DevCleaner /> },
  { id: "clion", icon: <CLion /> },
  { id: "vscode", bg: "#fff", icon: <CodeLogo size={44} />, running: true },
  { id: "visualstudio", bg: "#fff", icon: <VisualStudio />, running: true, extra: <PreBadge>PRE</PreBadge> },
  { id: "docker", icon: <svg width="62" height="62"><circle cx="31" cy="31" r="33.500" fill="#4aa5f5" /><g transform="translate(8 7)" color="#fff"><FaDocker size={46} /></g></svg>, running: true },
  { id: "azuredata", bg: "#fff", icon: <AzureData /> },
  { id: "github", bg: "linear-gradient(#8b3fae, #5a2f8c)", icon: <FaGithub size={51} color="#ececf2" /> },
  { id: "slack", bg: "#fdfdfd", icon: <Slack /> },
  { id: "spotify", icon: <svg width="62" height="62"><circle cx="31" cy="31" r="30" fill="#151515" /><g transform="translate(-2.500 -2.500)" color="#66d36e"><FaSpotify size={67} /></g></svg> },
  { id: "whatsapp", bg: "linear-gradient(#8ceb74, #4fbd37)", icon: <FaWhatsapp size={54} color="#fff" /> },
  { id: "lightroom", icon: <Lightroom>LrC</Lightroom> },
  { id: "discord", bg: "linear-gradient(#7a83ee, #545fe6)", icon: <FaDiscord size={45} color="#fff" />, running: true },
  { id: "finalcut", icon: <FinalCut /> },
  { id: "toolbox", icon: <Toolbox /> },
];

/* ---------- App ---------- */

const Stacked = ({ text }: { text: string }) => (
  <StackedLabel>{text.split("").map((c, i) => <span key={i}>{c}</span>)}</StackedLabel>
);

const DockApp = ({ app }: { app: App }) => (
  <DockSlot>
    <Tile $bg={app.bg}>{app.icon}</Tile>
    {app.running && <Running />}
    {app.extra}
  </DockSlot>
);

export default function App() {
  return (
    <Desktop>
      <GlobalStyle />
      <MenuBar>
        <MenuGroup>
          <AppleSlot><FaApple /></AppleSlot>
          <MenuItem $w={117} $bold>Safari</MenuItem>
          {menus.map(([label, w]) => <MenuItem key={label} $w={w}>{label}</MenuItem>)}
        </MenuGroup>
        <MenuGroup>
          <StatusSlot $w={79}><DockerStatus /></StatusSlot>
          <StatusText $w={57} $size={22} $track={0.2}>58%</StatusText>
          <StatusSlot $w={85}><Battery /></StatusSlot>
          <StatusSlot $w={20}><Stacked text="CPU" /></StatusSlot>
          <StatusSlot $w={129}><Meter $wide>{cpuLoad.map((h, i) => <MeterBar key={i} $h={h} $w={10} />)}</Meter></StatusSlot>
          <StatusSlot $w={21}><Stacked text="MEM" /></StatusSlot>
          <StatusSlot $w={49}><Meter><MeterBar $h={24} $w={14} /></Meter></StatusSlot>
          <StatusSlot $w={21}><Stacked text="SSD" /></StatusSlot>
          <StatusSlot $w={49}><Meter><MeterBar $h={24} $w={14} /></Meter></StatusSlot>
          <StatusSlot $w={54}><NetArrows /></StatusSlot>
          <StatusSlot $w={108}><Rates>45 KB/s<br />54 KB/s</Rates></StatusSlot>
          <StatusSlot $w={73}><Panes /></StatusSlot>
          <StatusSlot $w={71}><Wifi /></StatusSlot>
          <StatusSlot $w={62}><Search /></StatusSlot>
          <StatusSlot $w={63}><ControlCenter /></StatusSlot>
          <StatusSlot $w={60}><Siri /></StatusSlot>
          <StatusText $w={119}>Fri 3 Jun</StatusText>
          <StatusText $w={109} $track={1.8}>21:09</StatusText>
        </MenuGroup>
      </MenuBar>

      <BrowserWindow>
        <Toolbar>
          <TrafficLights>
            <Light $color="#ed6a5f" />
            <Light $color="#f5bf50" />
            <Light $color="#62c655" />
          </TrafficLights>
          <ToolSlot $w={53}><SidebarIcon /></ToolSlot>
          <Divider />
          <ToolSlot $w={66}><SmallDown /></ToolSlot>
          <ToolSlot $w={72}><Chevron dir="left" color="#b8b8b8" /></ToolSlot>
          <ToolSlot $w={388}><Chevron dir="right" color="#646464" /></ToolSlot>
          <ToolSlot $w={72}><HoneyIcon /></ToolSlot>
          <ToolSlot $w={80}><BlockerIcon /></ToolSlot>
          <ToolSlot $w={60}><ShieldIcon /></ToolSlot>
          <AddressBar>
            <Lock />
            <Address>localhost</Address>
            <Reload />
          </AddressBar>
          <ToolSlot $w={77}><Download /></ToolSlot>
          <ToolSlot $w={75}><Share /></ToolSlot>
          <ToolSlot $w={72}><Plus /></ToolSlot>
          <ToolSlot $w={70}><TabGrid /></ToolSlot>
        </Toolbar>
        <TabBar>
          <Tab $indent={44}>Online Store - Popescu Mihai</Tab>
          <Tab $indent={1}><PageIcon />- OnlineShop</Tab>
          <Tab $active $indent={1}><PageIcon />- OnlineShop</Tab>
        </TabBar>

        <NavBar>
          <ShopLogo />
          <TextLink>Pagina principala</TextLink>
          <NavLink><CartIcon /></NavLink>
        </NavBar>
        <Page>
          <CartTable>
            <CartRow $h={139} $line={2} $bg="#295c68">
              <HeadCell>Produs</HeadCell>
              <HeadCell $center>Cantitate</HeadCell>
              <HeadCell>Pret</HeadCell>
              <HeadCell />
            </CartRow>
            {cart.map((row) => (
              <CartRow key={row.name} $h={row.h} $line={row.line} $bg={row.bg}>
                <Cell $bold={row.bold}>{row.name}</Cell>
                <NumberCell $align="flex-end">{row.qty}</NumberCell>
                <PriceCell $bold={row.bold}>{row.price}</PriceCell>
                <Cell $align="center">{row.qty && <Actions><Pencil /><TrashIcon /></Actions>}</Cell>
              </CartRow>
            ))}
          </CartTable>
          <OrderButton>Comanda</OrderButton>
        </Page>
        <Footer>
          <span>© 2021 - OnlineShop -</span>
          <a>Politica de confidentialitate</a>
        </Footer>
      </BrowserWindow>

      <Dock>
        {apps.map((app) => <DockApp key={app.id} app={app} />)}
        <DockRule />
        <DockApp app={{ id: "preview", icon: <Preview />, running: true }} />
        <DockRule />
        <MiniWindow>
          <MiniScreen bg="#232733" side="#1e222d" lines="#3d4460" rows={[22, 16, 28, 12, 24, 18, 26, 14, 10]} />
          <MiniBadge $bg="#fff"><CodeLogo size={17} /></MiniBadge>
        </MiniWindow>
        <MiniWindow>
          <MiniScreen bg="#1b1b1b" side="#3a3831" lines="#4f5a5f" h={36} rows={[8, 0, 0, 0, 0, 0, 0]} />
          <MiniBadge $bg="none"><Finder size={24} /></MiniBadge>
        </MiniWindow>
        <MiniWindow>
          <MiniScreen bg="#36373a" side="#2c2d31" lines="#85523c" rows={[16, 14, 16, 10, 24, 12, 20, 16, 24]} />
          <MiniBadge $bg="#5f6bea"><FaDiscord size={17} color="#fff" /></MiniBadge>
        </MiniWindow>
        <MiniWindow>
          <MiniScreen bg="#22313a" side="#14242b" lines="#3e5560" rows={[14, 40, 12, 18]} />
          <MiniBadge $bg="#4aa5f5" $round><FaDocker size={16} color="#fff" /></MiniBadge>
        </MiniWindow>
        <DockSlot><Tile><Trash /></Tile></DockSlot>
      </Dock>
    </Desktop>
  );
}
